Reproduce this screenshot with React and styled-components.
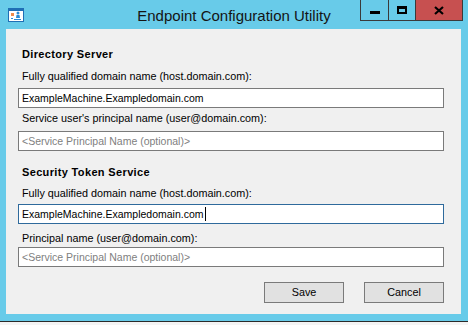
import React from "react";
import styled, { createGlobalStyle } from "styled-components";

const GlobalStyle = createGlobalStyle`
  html, body {
    margin: 0;
    padding: 0;
    background: #ffffff;
  }
  body {
    font-family: "Liberation Sans", Arial, sans-serif;
  }
`;

const Window = styled.div`
  width: 468px;
  height: 325px;
  background: #68cbe9;
  display: flex;
  flex-direction: column;
  overflow: hidden;
`;

const TitleBar = styled.div`
  height: 30px;
  display: grid;
  grid-template-columns: 1fr auto 1fr;
  align-items: start;
`;

const AppIcon = styled.svg`
  margin: 8px 0 0 8px;
  display: block;
`;

const Title = styled.div`
  font-size: 15px;
  line-height: 18px;
  padding-top: 7px;
  color: #141414;
  white-space: nowrap;
`;

const Controls = styled.div`
  justify-self: end;
  margin-right: 5px;
  display: flex;
  height: 21px;
  border: 1px solid #3a3a3a;
  border-top: none;
  box-sizing: border-box;
`;

const CtlButton = styled.div`
  width: ${(p) => p.$w}px;
  height: 100%;
  background: ${(p) => (p.$close ? "#c75050" : "transparent")};
  border-left: ${(p) => (p.$first ? "none" : "1px solid #3a3a3a")};
  display: flex;
  align-items: center;
  justify-content: center;
`;

const MinGlyph = styled.div`
  width: 10px;
  height: 3px;
  background: #000;
  margin-top: 4px;
`;

const MaxGlyph = styled.div`
  width: 10px;
  height: 8px;
  box-sizing: border-box;
  border: 2px solid #000;
  border-top-width: 3px;
  margin-top: -1px;
`;

const Frame = styled.div`
  display: flex;
  padding: 0 7px 0 6px;
`;

const Client = styled.div`
  flex: 1;
  height: 285px;
  background: #f0f0f0;
  box-sizing: border-box;
  padding: 19px 17px 0 12px;
  display: flex;
  flex-direction: column;
  font-size: 10.8px;
  color: #000;
`;

const Heading = styled.div`
  font-weight: bold;
  font-size: 11px;
  letter-spacing: 0.35px;
  line-height: 13px;
  padding-left: 4px;
  margin-top: ${(p) => p.$top || 0}px;
`;

const Label = styled.div`
  line-height: 13px;
  padding-left: 4px;
  margin-top: ${(p) => p.$top || 0}px;
  white-space: nowrap;
`;

const TextBox = styled.div`
  height: 20px;
  box-sizing: border-box;
  background: #fff;
  border: 1px solid ${(p) => (p.$focused ? "#2f6a9c" : "#7a7a7a")};
  padding: 0 3px;
  font-size: 10.5px;
  line-height: 18px;
  margin-top: ${(p) => p.$top || 0}px;
  color: ${(p) => (p.$placeholder ? "#808080" : "#000")};
  white-space: nowrap;
  display: flex;
  align-items: center;
`;

const Caret = styled.span`
  display: inline-block;
  width: 1px;
  height: 14px;
  background: #000;
  margin-left: 1px;
`;

const ButtonRow = styled.div`
  display: flex;
  justify-content: flex-end;
  gap: 20px;
  margin-top: 15px;
`;

const Button = styled.div`
  width: 80px;
  height: 21px;
  box-sizing: border-box;
  background: #e1e1e1;
  border: 1px solid #7a7a7a;
  display: flex;
  align-items: center;
  justify-content: center;
  line-height: 13px;
`;

const BottomFrame = styled.div`
  height: 7px;
`;

const Strip = styled.div`
  height: 3px;
  border-top: 1px solid #2b2b2b;
  background: #f4f4f4;
`;

function Icon() {
  return (
    <AppIcon width="16" height="14" viewBox="0 0 16 14">
      <rect x="0.5" y="0.5" width="15" height="13" fill="#fff" stroke="#1f6fb5" />
      <rect x="1" y="1" width="14" height="2" fill="#1f6fb5" />
      <rect x="3" y="5" width="3" height="3" fill="#f08a4b" />
      <circle cx="10" cy="5" r="1.5" fill="#2a8ad4" />
      <path d="M8 10 L8.5 7 L11.5 7 L12 10 Z" fill="#2a8ad4" />
      <rect x="3" y="10" width="2" height="1" fill="#2a8ad4" />
      <rect x="6" y="11" width="7" height="1" fill="#2a8ad4" />
    </AppIcon>
  );
}

export default function App() {
  return (
    <>
      <GlobalStyle />
      <Window>
        <TitleBar>
          <Icon />
          <Title>Endpoint Configuration Utility</Title>
          <Controls>
            <CtlButton $w={27} $first>
              <MinGlyph />
            </CtlButton>
            <CtlButton $w={26}>
              <MaxGlyph />
            </CtlButton>
            <CtlButton $w={46} $close>
              <svg width="10" height="9" viewBox="0 0 10 9">
                <path d="M1 1 L9 8 M9 1 L1 8" stroke="#000" strokeWidth="2.2" />
              </svg>
            </CtlButton>
          </Controls>
        </TitleBar>
        <Frame>
          <Client>
            <Heading>Directory Server</Heading>
            <Label $top={9}>Fully qualified domain name (host.domain.com):</Label>
            <TextBox $top={5}>ExampleMachine.Exampledomain.com</TextBox>
            <Label $top={4}>Service user's principal name (user@domain.com):</Label>
            <TextBox $top={6} $placeholder>
              &lt;Service Principal Name (optional)&gt;
            </TextBox>
            <Heading $top={15}>Security Token Service</Heading>
            <Label $top={8}>Fully qualified domain name (host.domain.com):</Label>
            <TextBox $top={4} $focused>
              ExampleMachine.Exampledomain.com
              <Caret />
            </TextBox>
            <Label $top={8}>Principal name (user@domain.com):</Label>
            <TextBox $top={2} $placeholder>
              &lt;Service Principal Name (optional)&gt;
            </TextBox>
            <ButtonRow>
              <Button>Save</Button>
              <Button>Cancel</Button>
            </ButtonRow>
          </Client>
        </Frame>
        <BottomFrame />
        <Strip />
      </Window>
    </>
  );
}
